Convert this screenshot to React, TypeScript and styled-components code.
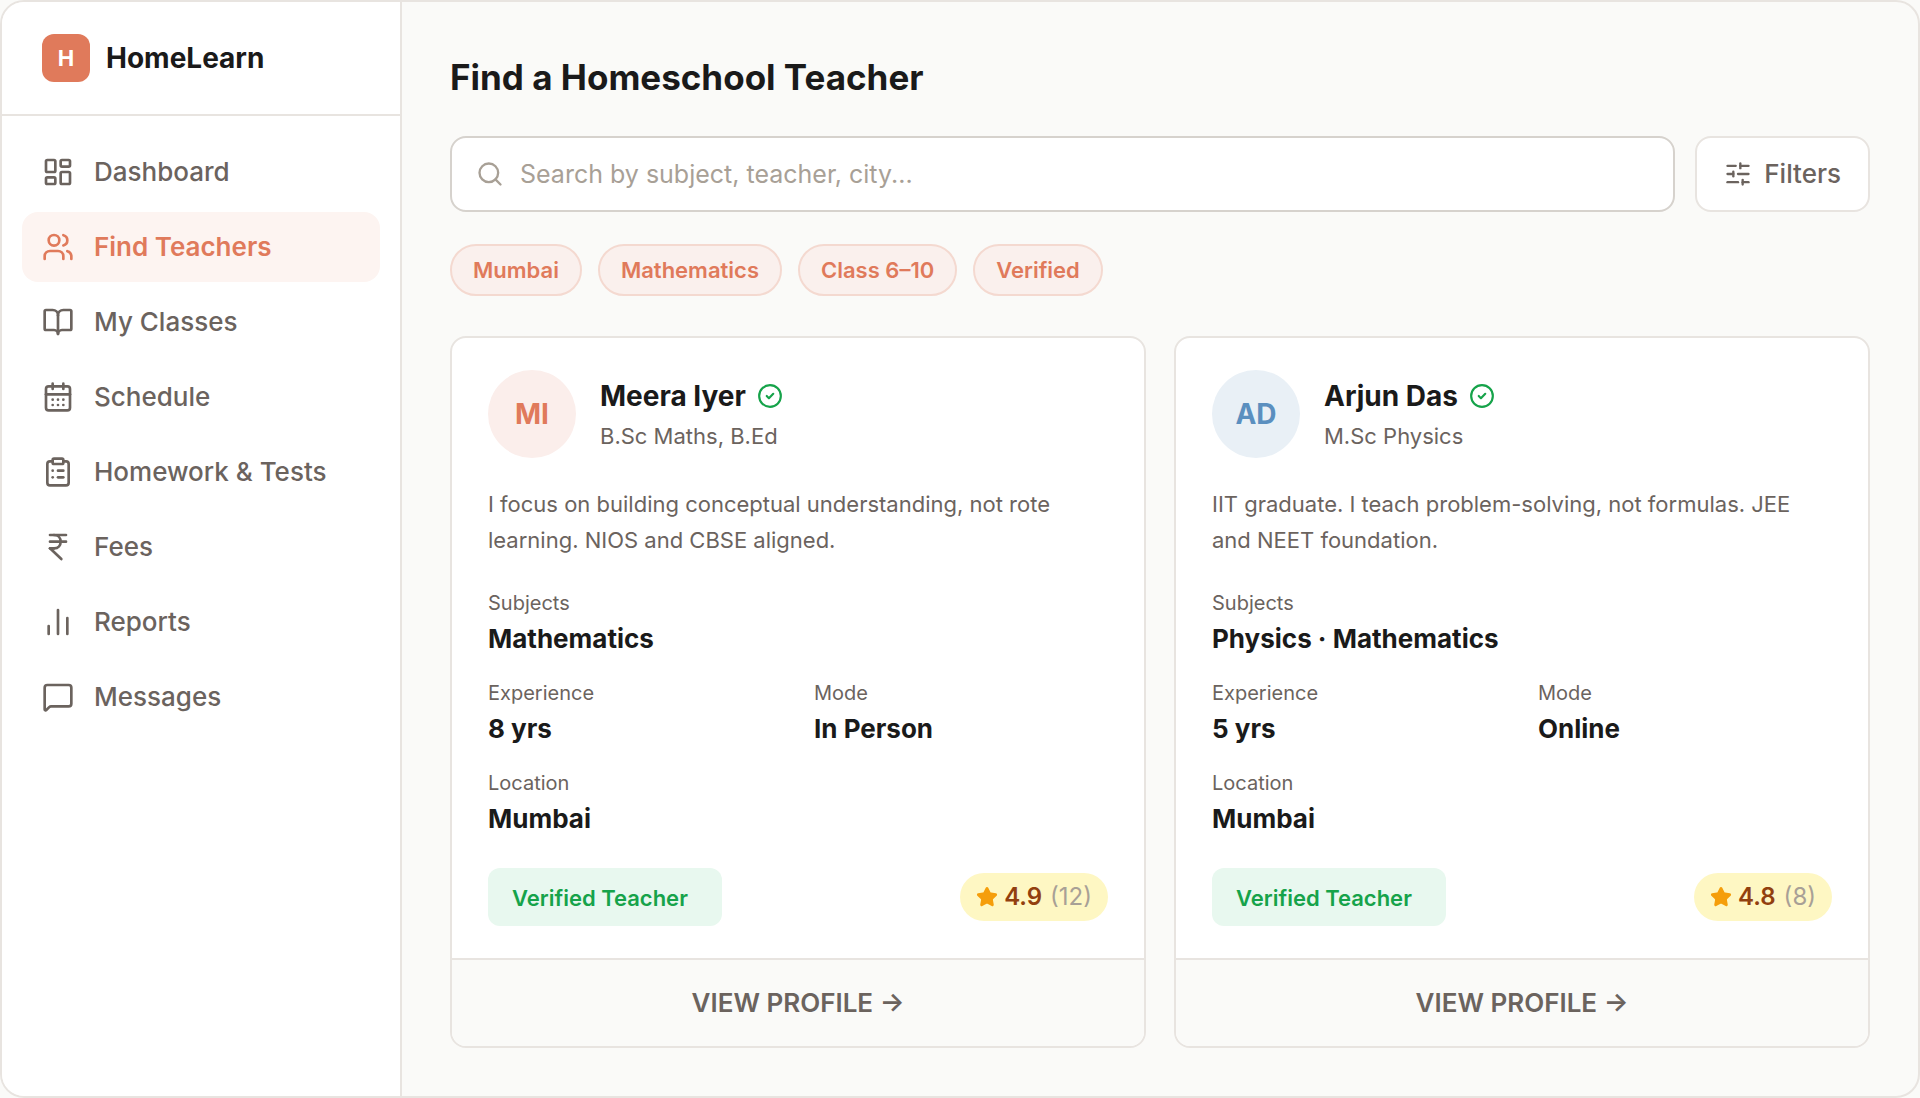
import React from "react";
import styled, { createGlobalStyle } from "styled-components";
import {
  BookOpen,
  CalendarDays,
  ChartNoAxesColumn,
  CircleCheck,
  ClipboardList,
  IndianRupee,
  LayoutDashboard,
  MessageSquare,
  Search,
  SlidersHorizontal,
  Star,
  Users,
  type LucideIcon,
} from "lucide-react";

const color = {
  page: "#fafaf8",
  surface: "#ffffff",
  line: "#e8e4e0",
  fieldLine: "#d6d2cd",
  ink: "#1a1a1a",
  muted: "#6b635e",
  faint: "#a8a096",
  accent: "#e07a5b",
  green: "#16a34a",
};

const GlobalStyle = createGlobalStyle`
  *, *::before, *::after { box-sizing: border-box; }
  body {
    margin: 0;
    background: ${color.page};
    color: ${color.ink};
    font-family: Inter, "Liberation Sans", sans-serif;
    font-size: 26px;
    line-height: 36px;
    -webkit-font-smoothing: antialiased;
  }
  button, input { font: inherit; }
  h1, h2, p, dl, dd, ul { margin: 0; padding: 0; }
`;

const Shell = styled.div`
  display: flex;
  min-height: 100vh;
  border: 2px solid ${color.line};
  border-radius: 24px;
  overflow: hidden;
  background: ${color.page};
`;

const Sidebar = styled.aside`
  flex: 0 0 400px;
  background: ${color.surface};
  border-right: 2px solid ${color.line};
`;

const Brand = styled.div`
  display: flex;
  align-items: center;
  gap: 16px;
  padding: 32px 40px;
  border-bottom: 2px solid ${color.line};
`;

const BrandMark = styled.span`
  display: grid;
  place-items: center;
  width: 48px;
  height: 48px;
  border-radius: 12px;
  background: ${color.accent};
  color: #fff;
  font-size: 22px;
  font-weight: 700;
`;

const BrandName = styled.span`
  font-size: 28px;
  font-weight: 700;
`;

const Nav = styled.nav`
  display: flex;
  flex-direction: column;
  gap: 5px;
  padding: 21px 20px;
`;

const NavLink = styled.a<{ $active?: boolean }>`
  display: flex;
  align-items: center;
  gap: 20px;
  height: 70px;
  padding: 0 20px;
  border-radius: 16px;
  text-decoration: none;
  font-weight: ${(p) => (p.$active ? 600 : 500)};
  color: ${(p) => (p.$active ? color.accent : color.muted)};
  background: ${(p) => (p.$active ? "#fdf4f1" : "transparent")};
`;

const Main = styled.main`
  flex: 1;
  min-width: 0;
  padding: 48px;
`;

const Title = styled.h1`
  font-size: 35px;
  line-height: 54px;
  font-weight: 700;
`;

const SearchRow = styled.form`
  display: flex;
  gap: 20px;
  margin-top: 32px;
`;

const SearchField = styled.label`
  flex: 1;
  display: flex;
  align-items: center;
  gap: 16px;
  height: 76px;
  padding: 0 24px;
  border: 2px solid ${color.fieldLine};
  border-radius: 16px;
  background: ${color.surface};
  color: ${color.faint};
`;

const SearchInput = styled.input`
  flex: 1;
  min-width: 0;
  padding: 0;
  border: 0;
  outline: 0;
  background: transparent;
  color: ${color.ink};
  font-size: 25px;
  &::placeholder { color: ${color.faint}; opacity: 1; }
`;

const FilterButton = styled.button`
  display: flex;
  align-items: center;
  gap: 12px;
  padding: 0 27px;
  border: 2px solid ${color.line};
  border-radius: 16px;
  background: ${color.surface};
  color: ${color.muted};
  font-weight: 500;
`;

const Chips = styled.div`
  display: flex;
  flex-wrap: wrap;
  gap: 16px;
  margin-top: 32px;
`;

const Chip = styled.button`
  height: 52px;
  padding: 0 21px;
  border: 2px solid #f4d9d0;
  border-radius: 26px;
  background: #faf0ed;
  color: ${color.accent};
  font-size: 22px;
  font-weight: 600;
`;

const Cards = styled.div`
  display: grid;
  grid-template-columns: repeat(2, minmax(0, 1fr));
  gap: 28px;
  margin-top: 40px;
`;

const Card = styled.article`
  border: 2px solid ${color.line};
  border-radius: 16px;
  overflow: hidden;
  background: ${color.surface};
`;

const CardBody = styled.div`
  padding: 32px 36px;
`;

const Person = styled.header`
  display: flex;
  align-items: center;
  gap: 24px;
`;

const Avatar = styled.span<{ $bg: string; $fg: string }>`
  display: grid;
  place-items: center;
  width: 88px;
  height: 88px;
  border-radius: 50%;
  background: ${(p) => p.$bg};
  color: ${(p) => p.$fg};
  font-size: 28px;
  font-weight: 700;
`;

const PersonText = styled.div`
  display: grid;
  gap: 4px;
  padding-top: 4px;
`;

const Name = styled.h2`
  display: flex;
  align-items: center;
  gap: 11px;
  font-size: 28px;
  font-weight: 700;
  svg { color: ${color.green}; }
`;

const Degree = styled.p`
  color: ${color.muted};
  font-size: 22px;
`;

const Bio = styled.p`
  margin-top: 28px;
  color: ${color.muted};
  font-size: 22px;
`;

const Facts = styled.dl`
  display: grid;
  grid-template-columns: 1fr 1fr;
  gap: 18px 32px;
  margin-top: 27px;
`;

const Fact = styled.div<{ $wide?: boolean }>`
  grid-column: ${(p) => (p.$wide ? "1 / -1" : "auto")};
`;

const FactLabel = styled.dt`
  color: ${color.muted};
  font-size: 20px;
`;

const FactValue = styled.dd`
  font-weight: 700;
`;

const Status = styled.div`
  display: flex;
  align-items: center;
  justify-content: space-between;
  margin-top: 31px;
`;

const Verified = styled.span`
  padding: 12px 34px 10px 24px;
  border-radius: 12px;
  background: #e8f8ef;
  color: ${color.green};
  font-size: 22px;
  font-weight: 600;
`;

const Rating = styled.span`
  display: flex;
  align-items: center;
  gap: 6px;
  padding: 6px 16px;
  border-radius: 24px;
  background: #fef7c3;
  color: #92400e;
  font-size: 24px;
  font-weight: 600;
  svg { color: #f59e0b; }
`;

const Reviews = styled.span`
  margin-left: 2px;
  color: ${color.faint};
  font-weight: 400;
`;

const ProfileButton = styled.button`
  display: block;
  width: 100%;
  height: 88px;
  padding: 0;
  border: 0;
  border-top: 2px solid ${color.line};
  background: ${color.page};
  color: ${color.muted};
  font-weight: 600;
  text-transform: uppercase;
`;

const navItems: { label: string; icon: LucideIcon; active?: boolean }[] = [
  { label: "Dashboard", icon: LayoutDashboard },
  { label: "Find Teachers", icon: Users, active: true },
  { label: "My Classes", icon: BookOpen },
  { label: "Schedule", icon: CalendarDays },
  { label: "Homework & Tests", icon: ClipboardList },
  { label: "Fees", icon: IndianRupee },
  { label: "Reports", icon: ChartNoAxesColumn },
  { label: "Messages", icon: MessageSquare },
];

const filters = ["Mumbai", "Mathematics", "Class 6–10", "Verified"];

const teachers = [
  {
    initials: "MI",
    bg: "#fbeeeb",
    fg: "#e07a5b",
    name: "Meera Iyer",
    degree: "B.Sc Maths, B.Ed",
    bio: "I focus on building conceptual understanding, not rote learning. NIOS and CBSE aligned.",
    subjects: "Mathematics",
    experience: "8 yrs",
    mode: "In Person",
    location: "Mumbai",
    rating: "4.9",
    reviews: 12,
  },
  {
    initials: "AD",
    bg: "#e9f0f6",
    fg: "#5b8fbf",
    name: "Arjun Das",
    degree: "M.Sc Physics",
    bio: "IIT graduate. I teach problem-solving, not formulas. JEE and NEET foundation.",
    subjects: "Physics · Mathematics",
    experience: "5 yrs",
    mode: "Online",
    location: "Mumbai",
    rating: "4.8",
    reviews: 8,
  },
];

function TeacherCard({ teacher: t }: { teacher: (typeof teachers)[number] }) {
  return (
    <Card>
      <CardBody>
        <Person>
          <Avatar $bg={t.bg} $fg={t.fg}>{t.initials}</Avatar>
          <PersonText>
            <Name>
              {t.name}
              <CircleCheck size={26} strokeWidth={2} aria-label="Verified" />
            </Name>
            <Degree>{t.degree}</Degree>
          </PersonText>
        </Person>
        <Bio>{t.bio}</Bio>
        <Facts>
          <Fact $wide>
            <FactLabel>Subjects</FactLabel>
            <FactValue>{t.subjects}</FactValue>
          </Fact>
          <Fact>
            <FactLabel>Experience</FactLabel>
            <FactValue>{t.experience}</FactValue>
          </Fact>
          <Fact>
            <FactLabel>Mode</FactLabel>
            <FactValue>{t.mode}</FactValue>
          </Fact>
          <Fact $wide>
            <FactLabel>Location</FactLabel>
            <FactValue>{t.location}</FactValue>
          </Fact>
        </Facts>
        <Status>
          <Verified>Verified Teacher</Verified>
          <Rating>
            <Star size={22} fill="currentColor" aria-hidden />
            {t.rating}
            <Reviews>({t.reviews})</Reviews>
          </Rating>
        </Status>
      </CardBody>
      <ProfileButton type="button">View Profile →</ProfileButton>
    </Card>
  );
}

export default function App() {
  return (
    <>
      <GlobalStyle />
      <Shell>
        <Sidebar>
          <Brand>
            <BrandMark>H</BrandMark>
            <BrandName>HomeLearn</BrandName>
          </Brand>
          <Nav aria-label="Main">
            {navItems.map(({ label, icon: Icon, active }) => (
              <NavLink key={label} href="#" $active={active} aria-current={active ? "page" : undefined}>
                <Icon size={32} strokeWidth={2} aria-hidden />
                {label}
              </NavLink>
            ))}
          </Nav>
        </Sidebar>
        <Main>
          <Title>Find a Homeschool Teacher</Title>
          <SearchRow onSubmit={(e) => e.preventDefault()}>
            <SearchField>
              <Search size={28} strokeWidth={2} aria-hidden />
              <SearchInput type="text" aria-label="Search teachers" placeholder="Search by subject, teacher, city..." />
            </SearchField>
            <FilterButton type="button">
              <SlidersHorizontal size={28} strokeWidth={2} aria-hidden />
              Filters
            </FilterButton>
          </SearchRow>
          <Chips>
            {filters.map((f) => (
              <Chip key={f} type="button">{f}</Chip>
            ))}
          </Chips>
          <Cards>
            {teachers.map((t) => (
              <TeacherCard key={t.name} teacher={t} />
            ))}
          </Cards>
        </Main>
      </Shell>
    </>
  );
}
